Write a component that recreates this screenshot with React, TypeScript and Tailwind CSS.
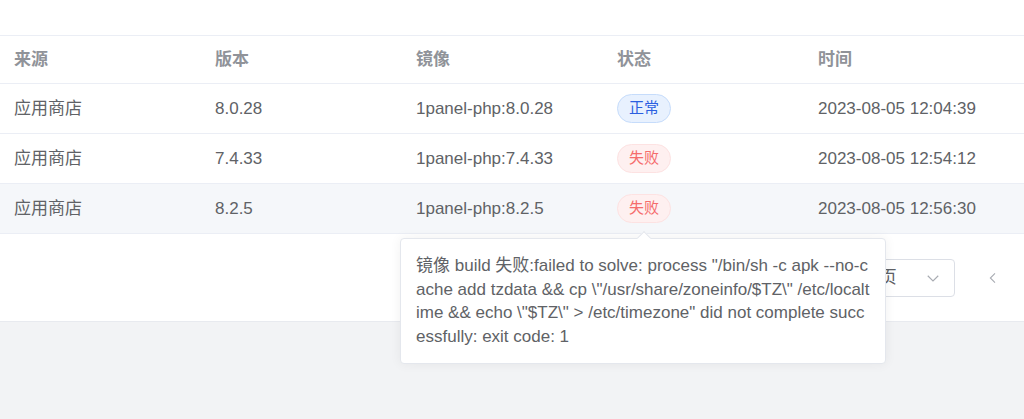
import React from "react";

const rows = [
  { src: "应用商店", ver: "8.0.28", img: "1panel-php:8.0.28", ok: true, time: "2023-08-05 12:04:39" },
  { src: "应用商店", ver: "7.4.33", img: "1panel-php:7.4.33", ok: false, time: "2023-08-05 12:54:12" },
  { src: "应用商店", ver: "8.2.5", img: "1panel-php:8.2.5", ok: false, time: "2023-08-05 12:56:30", hover: true },
];

function Tag({ ok }: { ok: boolean }) {
  return ok ? (
    <span className="inline-flex h-[29px] items-center rounded-full border border-[#c6dcfb] bg-[#e8f1fe] px-[11px] text-[15px] text-[#2c5fe0]">
      正常
    </span>
  ) : (
    <span className="inline-flex h-[29px] items-center rounded-full border border-[#fde2e2] bg-[#fef0f0] px-[11px] text-[15px] text-[#f56c6c]">
      失败
    </span>
  );
}

export default function App() {
  return (
    <div
      className="relative h-[419px] w-[1024px] overflow-hidden bg-[#f2f3f5] text-[17px] text-[#606266]"
      style={{ fontFamily: '"Liberation Sans", "Noto Sans CJK SC", sans-serif' }}
    >
      <div className="h-[322px] border-b border-[#e8eaef] bg-white">
        <div className="h-[36px] border-b border-[#ebeef5]" />
        <div className="grid h-[48px] grid-cols-[201px_201px_201px_201px_1fr] items-center border-b border-[#ebeef5] font-bold text-[#909399]">
          <div className="pl-[14px]">来源</div>
          <div className="pl-[14px]">版本</div>
          <div className="pl-[14px]">镜像</div>
          <div className="pl-[14px]">状态</div>
          <div className="pl-[14px]">时间</div>
        </div>
        {rows.map((r, i) => (
          <div
            key={i}
            className={`grid h-[50px] grid-cols-[201px_201px_201px_201px_1fr] items-center border-b border-[#ebeef5] ${
              r.hover ? "bg-[#f5f7fa]" : "bg-white"
            }`}
          >
            <div className="pl-[14px]">{r.src}</div>
            <div className="pl-[14px]">{r.ver}</div>
            <div className="pl-[14px]">{r.img}</div>
            <div className="pl-[14px]">
              <Tag ok={r.ok} />
            </div>
            <div className="pl-[14px]">{r.time}</div>
          </div>
        ))}
        <div className="flex h-[87px] items-center justify-end pr-[21px]">
          <div className="flex h-[38px] w-[129px] items-center justify-between rounded-[4px] border border-[#dcdfe6] pl-[12px] pr-[12px]">
            <span>10条/页</span>
            <svg width="18" height="18" viewBox="0 0 24 24" fill="none" stroke="#a8abb2" strokeWidth="1.5">
              <path d="M5 9l7 7 7-7" />
            </svg>
          </div>
          <div className="ml-[28px] flex h-[38px] w-[20px] items-center justify-center">
            <svg width="16" height="16" viewBox="0 0 24 24" fill="none" stroke="#a8abb2" strokeWidth="1.6">
              <path d="M15 5l-7 7 7 7" />
            </svg>
          </div>
        </div>
      </div>

      <div className="absolute left-[400px] top-[238px] h-[126px] w-[486px] rounded-[4px] border border-[#e4e7ed] bg-white pl-[15px] pr-[10px] pt-[15px] leading-[23.7px] shadow-[0_0_12px_rgba(0,0,0,0.06)]">
        <div className="absolute left-[238px] top-[-6px] h-[10px] w-[10px] rotate-45 border-l border-t border-[#e4e7ed] bg-white" />
        <div className="whitespace-nowrap">
          镜像 build 失败:failed to solve: process "/bin/sh -c apk --no-c
          <br />
          ache add tzdata &amp;&amp; cp \"/usr/share/zoneinfo/$TZ\" /etc/localt
          <br />
          ime &amp;&amp; echo \"$TZ\" &gt; /etc/timezone" did not complete succ
          <br />
          essfully: exit code: 1
        </div>
      </div>
    </div>
  );
}
